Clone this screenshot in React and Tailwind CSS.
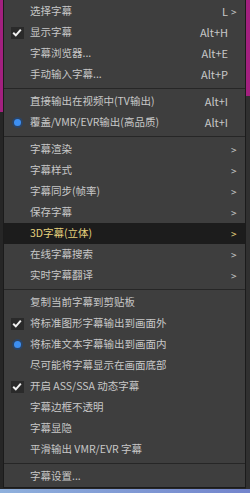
import React from 'react';

const groups = [
  [
    { label: '选择字幕', key: 'L', sub: true },
    { label: '显示字幕', key: 'Alt+H', mark: 'check' },
    { label: '字幕浏览器...', key: 'Alt+E' },
    { label: '手动输入字幕...', key: 'Alt+P' },
  ],
  [
    { label: '直接输出在视频中(TV输出)', key: 'Alt+I' },
    { label: '覆盖/VMR/EVR输出(高品质)', key: 'Alt+I', mark: 'radio' },
  ],
  [
    { label: '字幕渲染', sub: true },
    { label: '字幕样式', sub: true },
    { label: '字幕同步(帧率)', sub: true },
    { label: '保存字幕', sub: true },
    { label: '3D字幕(立体)', sub: true, active: true },
    { label: '在线字幕搜索', sub: true },
    { label: '实时字幕翻译', sub: true },
  ],
  [
    { label: '复制当前字幕到剪贴板' },
    { label: '将标准图形字幕输出到画面外', mark: 'check' },
    { label: '将标准文本字幕输出到画面内', mark: 'radio' },
    { label: '尽可能将字幕显示在画面底部' },
    { label: '开启 ASS/SSA 动态字幕', mark: 'check' },
    { label: '字幕边框不透明' },
    { label: '字幕显隐' },
    { label: '平滑输出 VMR/EVR 字幕' },
  ],
  [{ label: '字幕设置...' }],
];

const Check = () => (
  <div className="w-[13px] h-[12px] bg-[#2a2a2a] flex items-center justify-center">
    <svg width="10" height="9" viewBox="0 0 10 9">
      <path d="M1.2 4.8 L3.8 7.3 L8.8 1.6" fill="none" stroke="#f2f2f2" strokeWidth="2" />
    </svg>
  </div>
);

const Radio = () => (
  <div className="w-[11px] h-[11px] rounded-full bg-[#2b4466] flex items-center justify-center">
    <div className="w-[7px] h-[7px] rounded-full bg-[#3d8ff2]" />
  </div>
);

const Row = ({ item }) => (
  <div
    className={`flex items-center h-[21px] ${
      item.active ? 'bg-[#1c1c1c] text-[#e6d27c]' : 'text-[#c8c8c8]'
    }`}
  >
    <div className="w-[26px] flex justify-center">
      {item.mark === 'check' && <Check />}
      {item.mark === 'radio' && <Radio />}
    </div>
    <span className="flex-1 whitespace-nowrap">{item.label}</span>
    {item.key && <span className="whitespace-nowrap text-[11px]">{item.key}</span>}
    <span className="w-[17px] pl-[3px] text-[10px]">{item.sub ? '>' : ''}</span>
  </div>
);

export default function App() {
  return (
    <div className="relative w-[250px] h-[493px] overflow-hidden bg-[#262626]">
      {/* window behind the menu */}
      <div className="absolute left-0 top-0 w-[3px] h-[112px] bg-[#a3207f]" />
      <div className="absolute right-0 top-0 w-[4px] h-[96px] bg-[#a3207f]" />
      <div className="absolute right-0 top-[96px] w-[4px] h-[394px] bg-[#303030]" />
      <div className="absolute left-0 bottom-0 w-[250px] h-[4px] bg-gradient-to-r from-[#8fb0dc] to-[#7384cc]" />

      {/* context menu */}
      <div
        className="absolute left-[3px] top-[-1px] w-[243px] border border-[#1b1b1b] bg-[#3e3e3e] pt-[1px] text-[10.5px] leading-none"
        style={{ fontFamily: '"Noto Sans CJK SC", "Noto Sans", sans-serif' }}
      >
        {groups.map((g, gi) => (
          <div key={gi}>
            {gi > 0 && (
              <div className="h-[6px] flex flex-col justify-center">
                <div className="h-px bg-[#262626]" />
              </div>
            )}
            {g.map((item, i) => (
              <Row key={i} item={item} />
            ))}
          </div>
        ))}
      </div>
    </div>
  );
}
